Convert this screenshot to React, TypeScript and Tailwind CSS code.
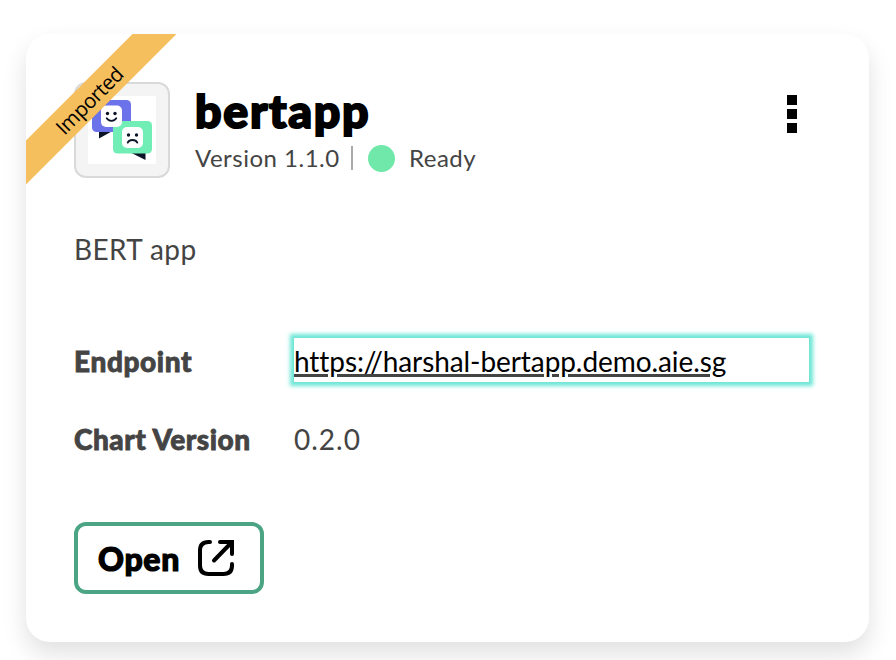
function ChatFaces() {
  return (
    <svg width="68" height="68" viewBox="0 0 68 68" aria-hidden="true">
      <rect width="68" height="68" fill="#fff" />
      <path d="M11 35h13.500L11 42.500z" fill="#0b1426" />
      <path d="M43.500 57h14v7z" fill="#0b1426" />
      <rect x="4" y="4" width="39" height="32" rx="4.500" fill="#6c72ea" />
      <rect x="25" y="25" width="39" height="32.500" rx="4.500" fill="#70eeb6" />
      <rect x="13" y="9.500" width="21" height="21.500" rx="5" fill="#fff" />
      <rect x="34" y="31" width="21" height="21" rx="5" fill="#fff" />
      <g fill="#0b1426">
        <circle cx="19.500" cy="17.500" r="1.700" />
        <circle cx="27" cy="17.500" r="1.700" />
        <circle cx="40.500" cy="39" r="1.700" />
        <circle cx="48.500" cy="39" r="1.700" />
      </g>
      <g fill="none" stroke="#0b1426" strokeWidth="1.800" strokeLinecap="round">
        <path d="M18.700 22.200c1.700 3.500 7.900 3.500 9.600 0" />
        <path d="M39.700 46.600c1.700-3.500 7.900-3.500 9.600 0" />
      </g>
    </svg>
  );
}

function ShareIcon() {
  return (
    <svg width="36" height="36" viewBox="0 0 36 36" fill="none" stroke="#000" strokeWidth="4" strokeLinecap="round" aria-hidden="true">
      <path d="M12 2h-1.500Q2 2 2 10.500v15Q2 34 10.500 34h15Q34 34 34 25.500V24" />
      <path d="M22 2h12v12" strokeLinejoin="miter" />
      <path d="M16 20.500 33 3" />
    </svg>
  );
}

export default function App() {
  return (
    <div className="h-[660px] w-[896px] overflow-hidden bg-white pl-[26px] pt-[34px] font-['Lato','Open_Sans',sans-serif] text-[#444444] [font-variant-ligatures:none]">
      <main className="relative flex h-[608px] w-[843px] flex-col rounded-3xl bg-white px-12 pt-12 shadow-[0_12px_24px_rgba(0,0,0,0.12)]">
        <header className="flex h-24">
          <div className="flex h-24 w-24 shrink-0 items-center justify-center rounded-xl border-2 border-[#d9d9d9] bg-[#f4f4f4]">
            <ChatFaces />
          </div>
          <div className="ml-[25px] flex-1">
            <h1 className="h-[60px] whitespace-nowrap text-[46.5px] font-black leading-[56px] tracking-[1.7px] text-black [-webkit-text-stroke:2px_#000]">
              <span>bertapp</span>
            </h1>
            <div className="flex h-8 items-center whitespace-nowrap text-2xl">
              <span className="w-[156px] tracking-[0.5px]">Version 1.1.0</span>
              <i className="h-6 w-0.5 bg-[#aaaaaa]" />
              <i className="ml-[15px] h-[27px] w-[27px] rounded-full bg-[#6fe8a9]" />
              <span className="ml-[14px] tracking-[0.5px]">Ready</span>
            </div>
          </div>
          <button aria-label="More actions" className="mr-6 mt-[13px] flex h-[38px] flex-col gap-1">
            <i className="h-[10px] w-[10px] bg-black" />
            <i className="h-[10px] w-[10px] bg-black" />
            <i className="h-[10px] w-[10px] bg-black" />
          </button>
        </header>
        <p className="mt-[53px] h-9 text-[28px] leading-9 tracking-[0.4px]">BERT app</p>
        <dl className="mt-[71px] grid grid-cols-[220px_515px] grid-rows-[44px_44px] gap-y-[34px] text-[28px] leading-[46px]">
          <dt className="font-black tracking-[0.6px] [-webkit-text-stroke:0.8px_#444]">Endpoint</dt>
          <dd className="h-11 whitespace-nowrap shadow-[0_0_4px_4px_#6de7d6]">
            <a className="tracking-[-0.08px] text-black underline decoration-[#444444] decoration-[3px] underline-offset-[2px]">https://harshal-bertapp.demo.aie.sg</a>
          </dd>
          <dt className="font-black tracking-[0.5px] [-webkit-text-stroke:0.8px_#444]">Chart Version</dt>
          <dd className="tracking-[1px]">0.2.0</dd>
        </dl>
        <button className="mt-[62px] flex h-[72px] w-[190px] items-center rounded-xl border-4 border-[#4ba483] pl-5 text-[32px] font-black text-black">
          <span className="w-[100px] pt-[2px] text-left tracking-[0.7px] [-webkit-text-stroke:1.2px_#000]">Open</span>
          <ShareIcon />
        </button>
        <div className="absolute left-0 top-0 h-[150px] w-[150px] overflow-hidden">
          <div className="absolute left-[-61px] top-[49px] flex h-[31px] w-[250px] -rotate-45 items-center justify-center bg-[#f5bf5d] pr-[4px] pt-[2px] font-['Open_Sans'] text-[20.5px] tracking-[-0.5px] text-black">Imported</div>
        </div>
      </main>
    </div>
  );
}
